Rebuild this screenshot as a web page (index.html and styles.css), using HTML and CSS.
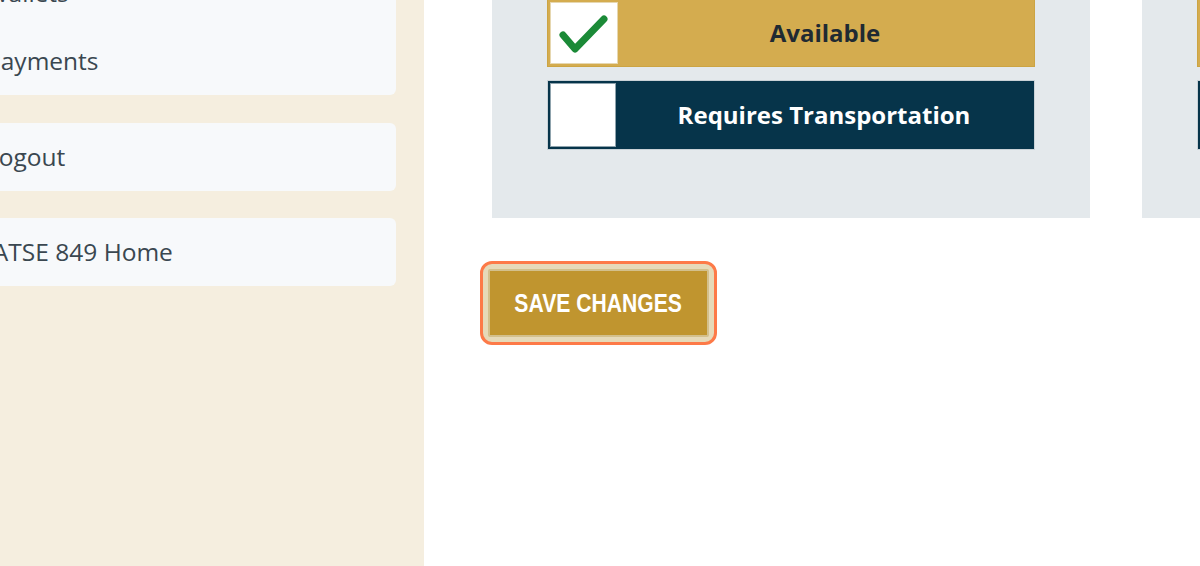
FILE: index.html
```html
<!DOCTYPE html>
<html lang="en">
<head>
<meta charset="utf-8">
<title>Availability</title>
<link rel="stylesheet" href="styles.css">
</head>
<body>
<div class="page">
  <aside class="sidebar">
    <nav class="menu">
      <div class="card">
        <a class="item" href="#">Wallets</a>
        <a class="item" href="#">Payments</a>
      </div>
      <div class="card">
        <a class="item" href="#">Logout</a>
      </div>
      <div class="card">
        <a class="item" href="#">IATSE 849 Home</a>
      </div>
    </nav>
  </aside>
  <main class="main">
    <div class="panels">
      <section class="panel">
        <div class="option option-on">
          <span class="box"><svg class="check" width="66" height="62" viewBox="0 0 66 62"><path d="M12 33 L24 47 L53 17" fill="none" stroke="#1b8a37" stroke-width="7" stroke-linecap="round" stroke-linejoin="round"/></svg></span>
          <span class="label">Available</span>
        </div>
        <div class="option option-off">
          <span class="box"></span>
          <span class="label">Requires Transportation</span>
        </div>
      </section>
      <section class="panel">
        <div class="option option-on">
          <span class="box"><svg class="check" width="66" height="62" viewBox="0 0 66 62"><path d="M12 33 L24 47 L53 17" fill="none" stroke="#1b8a37" stroke-width="7" stroke-linecap="round" stroke-linejoin="round"/></svg></span>
          <span class="label">Available</span>
        </div>
        <div class="option option-off">
          <span class="box"></span>
          <span class="label">Requires Transportation</span>
        </div>
      </section>
    </div>
    <div class="actions">
      <span class="focus-ring"><button class="save" type="button"><span class="save-text">SAVE CHANGES</span></button></span>
    </div>
  </main>
</div>
</body>
</html>
```
FILE: styles.css
```css
html, body {
  margin: 0;
  padding: 0;
  background: #ffffff;
  overflow: hidden;
}

body {
  font-family: "Open Sans", "Noto Sans", sans-serif;
}

.page {
  display: flex;
  margin-top: -56px;
  min-height: calc(100vh + 56px);
}

.sidebar {
  flex: 0 0 464px;
  margin-left: -40px;
  background: #f5eedf;
  padding: 15px 28px 0 0;
  box-sizing: border-box;
}

.menu {
  display: flex;
  flex-direction: column;
  gap: 27.5px;
}

.card {
  background: #f7f9fb;
  border-radius: 6px;
  display: flex;
  flex-direction: column;
}

.item {
  display: block;
  padding: 20px 20px 20px 26px;
  font-size: 24.5px;
  line-height: 28px;
  color: #3a4750;
  text-decoration: none;
  white-space: nowrap;
}

.main {
  flex: 1 1 auto;
  min-width: 0;
  overflow: hidden;
  padding-left: 56px;
}

.panels {
  display: flex;
  gap: 52px;
  margin-left: 12px;
}

.panel {
  flex: 0 0 598px;
  box-sizing: border-box;
  background: #e4e9ec;
  padding: 55px 55px 68px;
  display: flex;
  flex-direction: column;
  gap: 13px;
}

.option {
  display: flex;
  align-items: stretch;
  height: 68px;
  box-sizing: border-box;
  padding: 2px;
  border: 1px solid;
}

.option-on {
  background: #d4ac4f;
  border-color: #cca443;
  color: #1f2a32;
}

.option-off {
  height: 70px;
  background: #06344a;
  border-color: #c9d2d7;
  color: #ffffff;
}

.box {
  flex: 0 0 66px;
  background: #ffffff;
  box-sizing: border-box;
  border: 1px solid #e6d7b0;
  display: flex;
  align-items: center;
  justify-content: center;
}

.option-off .box {
  border-color: #8fa3ad;
}

.check {
  display: block;
}

.label {
  flex: 1 1 auto;
  display: flex;
  align-items: center;
  justify-content: center;
  font-weight: 700;
  font-size: 24px;
  padding-bottom: 2px;
}

.actions {
  margin-top: 43px;
  display: flex;
}

.focus-ring {
  display: inline-flex;
  border: 3px solid #fd7a48;
  border-radius: 12px;
  padding: 5px;
  background: #e6dab9;
}

.save {
  width: 221px;
  height: 68px;
  box-sizing: border-box;
  background: #c0952f;
  border: 2px solid #d3c08c;
  border-radius: 2px;
  color: #ffffff;
  font-family: "Liberation Sans", Arial, sans-serif;
  font-weight: 700;
  font-size: 25px;
  padding: 0;
  cursor: pointer;
  display: flex;
  align-items: center;
  justify-content: center;
}

.save-text {
  display: inline-block;
  transform: scaleX(0.845);
  white-space: nowrap;
}
```
